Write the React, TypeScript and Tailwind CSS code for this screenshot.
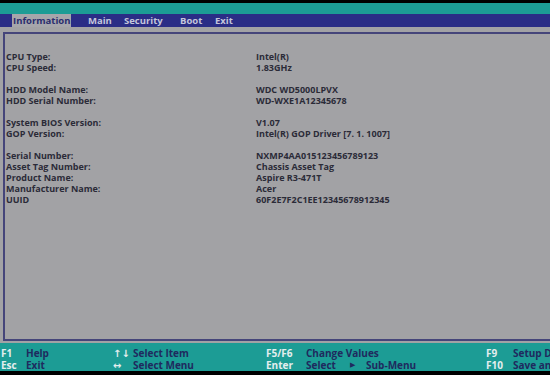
const groups: [string, string][][] = [
  [
    ["CPU Type:", "Intel(R)"],
    ["CPU Speed:", "1.83GHz"],
  ],
  [
    ["HDD Model Name:", "WDC WD5000LPVX"],
    ["HDD Serial Number:", "WD-WXE1A12345678"],
  ],
  [
    ["System BIOS Version:", "V1.07"],
    ["GOP Version:", "Intel(R) GOP Driver [7. 1. 1007]"],
  ],
  [
    ["Serial Number:", "NXMP4AA015123456789123"],
    ["Asset Tag Number:", "Chassis Asset Tag"],
    ["Product Name:", "Aspire R3-471T"],
    ["Manufacturer Name:", "Acer"],
    ["UUID", "60F2E7F2C1EE12345678912345"],
  ],
];

export default function App() {
  return (
    <div
      className="w-[550px] h-[375px] overflow-hidden flex flex-col bg-black"
      style={{ fontFamily: '"Open Sans", "DejaVu Sans", sans-serif' }}
    >
      <div className="h-[3px] bg-black shrink-0" />
      <div className="h-[11px] bg-[#1c9c95] shrink-0" />

      {/* Menu bar */}
      <div className="h-[13px] shrink-0 bg-[#2a2d86] flex items-stretch pl-[12px] text-[9.5px] font-bold leading-[13px] whitespace-nowrap">
        <div className="w-[76px] shrink-0">
          <span className="inline-block px-[1px] bg-[#a6a6ab] text-[#2a2d6e]">Information</span>
        </div>
        <div className="w-[36px] shrink-0 text-[#c4c6dc]">Main</div>
        <div className="w-[56px] shrink-0 text-[#c4c6dc]">Security</div>
        <div className="w-[35px] shrink-0 text-[#c4c6dc]">Boot</div>
        <div className="shrink-0 text-[#c4c6dc]">Exit</div>
      </div>

      {/* Body */}
      <div className="flex-1 bg-[#a2a2a5] pt-[5px] pl-[3px] flex flex-col">
        <div className="flex-1 border-l-2 border-t-2 border-b-2 border-[#45457a] pt-[17px] pl-[1px] text-[9px] font-bold text-[#2b2b38] leading-[11px]">
          {groups.map((g, gi) => (
            <div key={gi} className="mb-[11px]">
              {g.map(([k, v]) => (
                <div key={k} className="flex">
                  <div className="w-[250px] shrink-0">{k}</div>
                  <div>{v}</div>
                </div>
              ))}
            </div>
          ))}
        </div>
        <div className="h-[2px]" />
      </div>

      {/* Help bar */}
      <div className="h-[28px] shrink-0 bg-[#1c9c95] text-[10px] font-bold leading-[12px] pt-[4px] flex whitespace-nowrap">
        <div className="w-[113px] shrink-0 pl-[1px] grid grid-cols-[25px_auto] content-start">
          <span className="text-[#e4eeee]">F1</span>
          <span className="text-[#1f2a5e]">Help</span>
          <span className="text-[#e4eeee]">Esc</span>
          <span className="text-[#1f2a5e]">Exit</span>
        </div>
        <div className="w-[153px] shrink-0 grid grid-cols-[20px_auto] content-start">
          <span className="text-[#e4eeee]">↑↓</span>
          <span className="text-[#1f2a5e]">Select Item</span>
          <span className="text-[#e4eeee]">↔</span>
          <span className="text-[#1f2a5e]">Select Menu</span>
        </div>
        <div className="w-[220px] shrink-0 grid grid-cols-[40px_auto] content-start">
          <span className="text-[#e4eeee]">F5/F6</span>
          <span className="text-[#1f2a5e]">Change Values</span>
          <span className="text-[#e4eeee]">Enter</span>
          <span className="text-[#1f2a5e] flex">
            <span className="w-[44px]">Select</span>
            <span className="w-[16px] text-[7px]">▶</span>
            <span>Sub-Menu</span>
          </span>
        </div>
        <div className="shrink-0 grid grid-cols-[27px_auto] content-start">
          <span className="text-[#e4eeee]">F9</span>
          <span className="text-[#1f2a5e]">Setup Defaults</span>
          <span className="text-[#e4eeee]">F10</span>
          <span className="text-[#1f2a5e]">Save and Exit</span>
        </div>
      </div>
      <div className="h-[4px] bg-black shrink-0" />
    </div>
  );
}
